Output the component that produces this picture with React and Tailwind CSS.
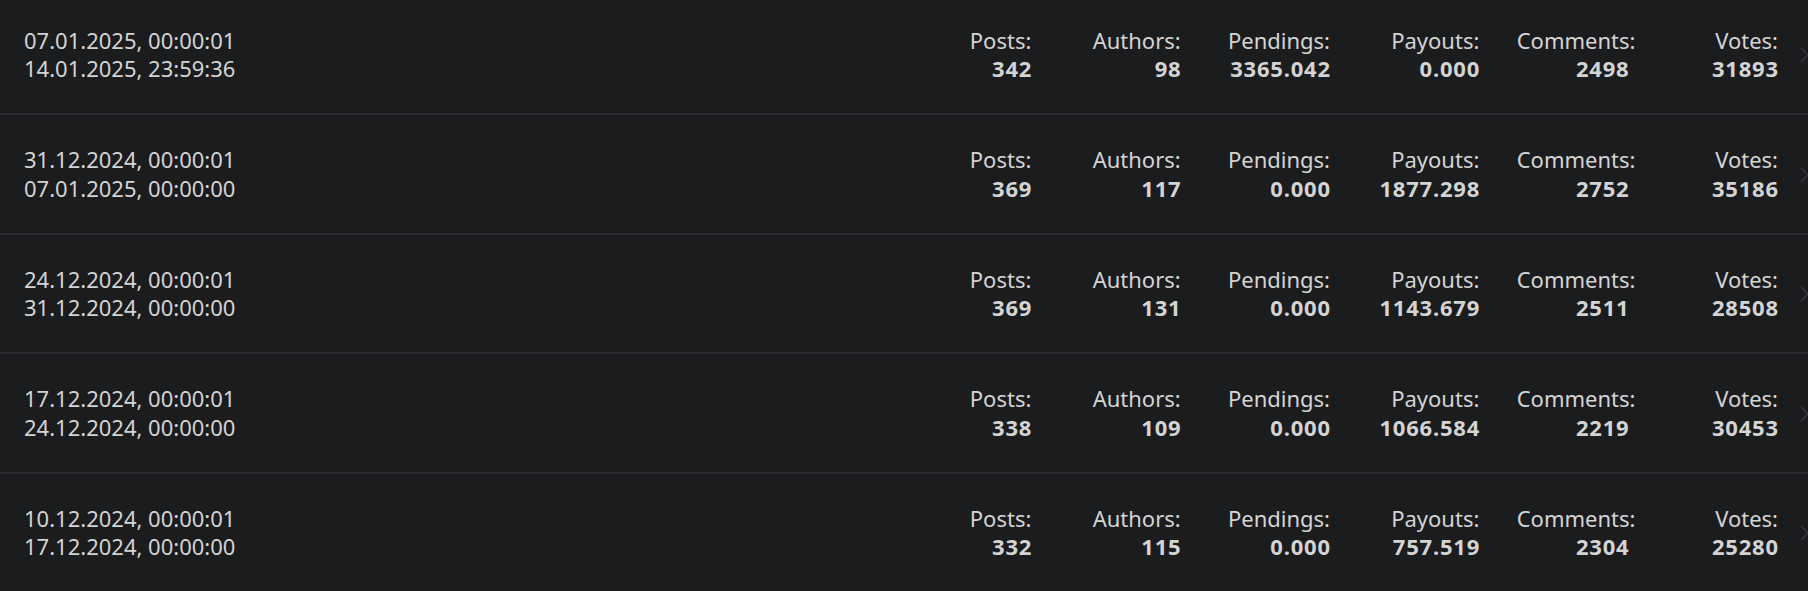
const rows = [
  { from: "07.01.2025, 00:00:01", to: "14.01.2025, 23:59:36", posts: "342", authors: "98", pendings: "3365.042", payouts: "0.000", comments: "2498", votes: "31893" },
  { from: "31.12.2024, 00:00:01", to: "07.01.2025, 00:00:00", posts: "369", authors: "117", pendings: "0.000", payouts: "1877.298", comments: "2752", votes: "35186" },
  { from: "24.12.2024, 00:00:01", to: "31.12.2024, 00:00:00", posts: "369", authors: "131", pendings: "0.000", payouts: "1143.679", comments: "2511", votes: "28508" },
  { from: "17.12.2024, 00:00:01", to: "24.12.2024, 00:00:00", posts: "338", authors: "109", pendings: "0.000", payouts: "1066.584", comments: "2219", votes: "30453" },
  { from: "10.12.2024, 00:00:01", to: "17.12.2024, 00:00:00", posts: "332", authors: "115", pendings: "0.000", payouts: "757.519", comments: "2304", votes: "25280" },
];

const cols = [
  ["Posts", "posts"],
  ["Authors", "authors"],
  ["Pendings", "pendings"],
  ["Payouts", "payouts"],
  ["Comments", "comments"],
  ["Votes", "votes"],
];

function Stat({ label, value }) {
  return (
    <div className="w-[112px] shrink-0 text-right whitespace-nowrap">
      <div>{label}:</div>
      <div className="font-bold tracking-[0.8px] mr-[-0.8px]">{value}</div>
    </div>
  );
}

export default function App() {
  return (
    <div
      className="w-full h-[591px] overflow-hidden bg-[#1b1c1e] text-[#d4d4d4] text-[22px] leading-[28.5px]"
      style={{ fontFamily: '"Noto Sans", "Open Sans", sans-serif' }}
    >
      <div className="mt-[-4.5px]">
        {rows.map((r, i) => (
          <div key={i} className="h-[119.5px] flex items-center pl-6 border-b-2 border-[#2a2b2e]">
            <div className="flex-1 whitespace-nowrap">
              <div>{r.from}</div>
              <div>{r.to}</div>
            </div>
            <div className="flex gap-[37.33px]">
              {cols.map(([label, key]) => (
                <Stat key={key} label={label} value={r[key]} />
              ))}
            </div>
            <svg className="ml-[22px] mr-[-8px] shrink-0 mt-[2px]" width="16" height="16" viewBox="0 0 16 16" fill="none">
              <path d="M1 1 L8 8 L1 15" stroke="#36373b" strokeWidth="1.5" />
            </svg>
          </div>
        ))}
      </div>
    </div>
  );
}
